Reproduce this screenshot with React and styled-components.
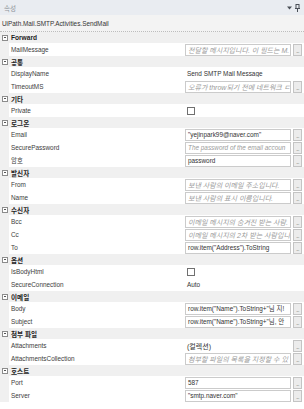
import React from "react";
import styled, { createGlobalStyle } from "styled-components";

const Global = createGlobalStyle`
  html, body { margin: 0; padding: 0; background: #ffffff; }
  body { font-family: "Liberation Sans", "Noto Sans CJK KR", sans-serif; }
`;

const Panel = styled.div`
  width: 304px;
  height: 409px;
  background: #ffffff;
  overflow: hidden;
  font-size: 6.5px;
  color: #333333;
`;

const TitleBar = styled.div`
  height: 15px;
  background: #e9ecf1;
  display: flex;
  align-items: center;
  padding: 0 4px;
  gap: 4px;
  color: #8e9399;
  font-size: 6.5px;
`;

const Grip = styled.div`
  flex: 1;
  height: 4px;
  margin-top: 2px;
  background-image: radial-gradient(circle, #b9bec6 0.55px, transparent 0.7px);
  background-size: 2px 2px;
`;

const TitleIcons = styled.div`
  display: flex;
  align-items: center;
  gap: 3px;
`;

const TypeName = styled.div`
  height: 16px;
  background: #f3f3f3;
  display: flex;
  align-items: center;
  padding-left: 2px;
  color: #333;
  font-size: 6.4px;
  border-bottom: 1px dotted #bdbdbd;
`;

const Grid = styled.div`
  display: flex;
  flex-direction: column;
`;

const CategoryRow = styled.div`
  height: 11px;
  background: #f0f0f0;
  display: flex;
  align-items: center;
  padding-left: 2px;
  gap: 3px;
  font-weight: bold;
  color: #1e1e1e;
  font-size: 6.6px;
`;

const Toggle = styled.span`
  width: 4px;
  height: 4px;
  border: 1px solid #8c8c8c;
  background: #fff;
  position: relative;
  flex: none;
  &::after {
    content: "";
    position: absolute;
    left: 1px;
    right: 1px;
    top: 1.5px;
    height: 1px;
    background: #555;
  }
`;

const PropRow = styled.div`
  height: 13px;
  display: grid;
  grid-template-columns: 9px 175px 1fr;
`;

const Gutter = styled.div`
  background: #f0f0f0;
`;

const NameCell = styled.div`
  display: flex;
  align-items: center;
  padding-left: 2px;
  color: #3c3c3c;
  font-size: 6.4px;
  white-space: nowrap;
  overflow: hidden;
`;

const ValueCell = styled.div`
  display: flex;
  align-items: center;
  gap: 2px;
  padding: 0 2px 0 1px;
  min-width: 0;
`;

const TextBox = styled.div`
  flex: 1;
  min-width: 0;
  height: 10px;
  border: 1px solid #cbcbcb;
  background: #fff;
  display: flex;
  align-items: center;
  padding-left: 2px;
  overflow: hidden;
  white-space: nowrap;
  font-size: ${(p) => (p.$ko ? "7px" : "6.4px")};
  color: ${(p) => (p.$hint ? "#9a9a9a" : "#333")};
  font-style: ${(p) => (p.$hint ? "italic" : "normal")};
`;

const PlainValue = styled.div`
  flex: 1;
  min-width: 0;
  padding-left: 2px;
  white-space: nowrap;
  overflow: hidden;
  font-size: ${(p) => (p.$ko ? "7px" : "6.4px")};
  color: #333;
`;

const DotsButton = styled.div`
  width: 7px;
  height: 10px;
  flex: none;
  border: 1px solid #c4c4c4;
  background: #ececec;
  display: flex;
  align-items: flex-end;
  justify-content: center;
  font-size: 5px;
  line-height: 7px;
  color: #555;
  letter-spacing: -0.5px;
`;

const CheckBox = styled.div`
  width: 6px;
  height: 6px;
  margin-left: 2px;
  border: 1px solid #707070;
  background: #fff;
`;

const data = [
  { cat: "Forward", props: [["MailMessage", "box", "전달할 메시지입니다. 이 필드는 M.", true, true]] },
  {
    cat: "공통",
    props: [
      ["DisplayName", "plain", "Send SMTP Mail Message"],
      ["TimeoutMS", "box", "오류가 throw되기 전에 네트워크 ㄷ", true, true],
    ],
  },
  { cat: "기타", props: [["Private", "check"]] },
  {
    cat: "로그온",
    props: [
      ["Email", "box", "\"yejinpark99@naver.com\""],
      ["SecurePassword", "box", "The password of the email accoun", true],
      ["암호", "box", "password"],
    ],
  },
  {
    cat: "발신자",
    props: [
      ["From", "box", "보낸 사람의 이메일 주소입니다.", true, true],
      ["Name", "box", "보낸 사람의 표시 이름입니다.", true, true],
    ],
  },
  {
    cat: "수신자",
    props: [
      ["Bcc", "box", "이메일 메시지의 숨겨진 받는 사람.", true, true],
      ["Cc", "box", "이메일 메시지의 2차 받는 사람입니", true, true],
      ["To", "box", "row.item(\"Address\").ToString"],
    ],
  },
  {
    cat: "옵션",
    props: [
      ["IsBodyHtml", "check"],
      ["SecureConnection", "plain", "Auto"],
    ],
  },
  {
    cat: "이메일",
    props: [
      ["Body", "box", "row.item(\"Name\").ToString+\"님 지!"],
      ["Subject", "box", "row.item(\"Name\").ToString+\"님, 안"],
    ],
  },
  {
    cat: "첨부 파일",
    props: [
      ["Attachments", "plainBtn", "(컬렉션)", false, true],
      ["AttachmentsCollection", "box", "첨부할 파일의 목록을 지정할 수 있", true, true],
    ],
  },
  {
    cat: "호스트",
    props: [
      ["Port", "box", "587"],
      ["Server", "box", "\"smtp.naver.com\""],
    ],
  },
];

function Value({ kind, text, hint, ko }) {
  if (kind === "box")
    return (
      <ValueCell>
        <TextBox $hint={hint} $ko={ko}>{text}</TextBox>
        <DotsButton>...</DotsButton>
      </ValueCell>
    );
  if (kind === "plainBtn")
    return (
      <ValueCell>
        <PlainValue $ko={ko}>{text}</PlainValue>
        <DotsButton>...</DotsButton>
      </ValueCell>
    );
  if (kind === "check")
    return (
      <ValueCell>
        <CheckBox />
      </ValueCell>
    );
  return (
    <ValueCell>
      <PlainValue $ko={ko}>{text}</PlainValue>
    </ValueCell>
  );
}

export default function App() {
  return (
    <>
      <Global />
      <Panel>
        <TitleBar>
          <span>속성</span>
          <Grip />
          <TitleIcons>
            <svg width="5" height="4" viewBox="0 0 5 4">
              <path d="M0 0.5 L5 0.5 L2.5 3.5 Z" fill="#4a4f57" />
            </svg>
            <svg width="5" height="8" viewBox="0 0 5 8">
              <rect x="1" y="0.5" width="3" height="4" fill="none" stroke="#4a4f57" strokeWidth="1" />
              <line x1="0" y1="4.5" x2="5" y2="4.5" stroke="#4a4f57" strokeWidth="1" />
              <line x1="2.5" y1="4.5" x2="2.5" y2="8" stroke="#4a4f57" strokeWidth="1" />
            </svg>
          </TitleIcons>
        </TitleBar>
        <TypeName>UiPath.Mail.SMTP.Activities.SendMail</TypeName>
        <Grid>
          {data.map((c) => (
            <React.Fragment key={c.cat}>
              <CategoryRow>
                <Toggle />
                <span>{c.cat}</span>
              </CategoryRow>
              {c.props.map(([name, kind, text, hint, ko]) => (
                <PropRow key={name}>
                  <Gutter />
                  <NameCell>{name}</NameCell>
                  <Value kind={kind} text={text} hint={hint} ko={ko} />
                </PropRow>
              ))}
            </React.Fragment>
          ))}
        </Grid>
      </Panel>
    </>
  );
}
